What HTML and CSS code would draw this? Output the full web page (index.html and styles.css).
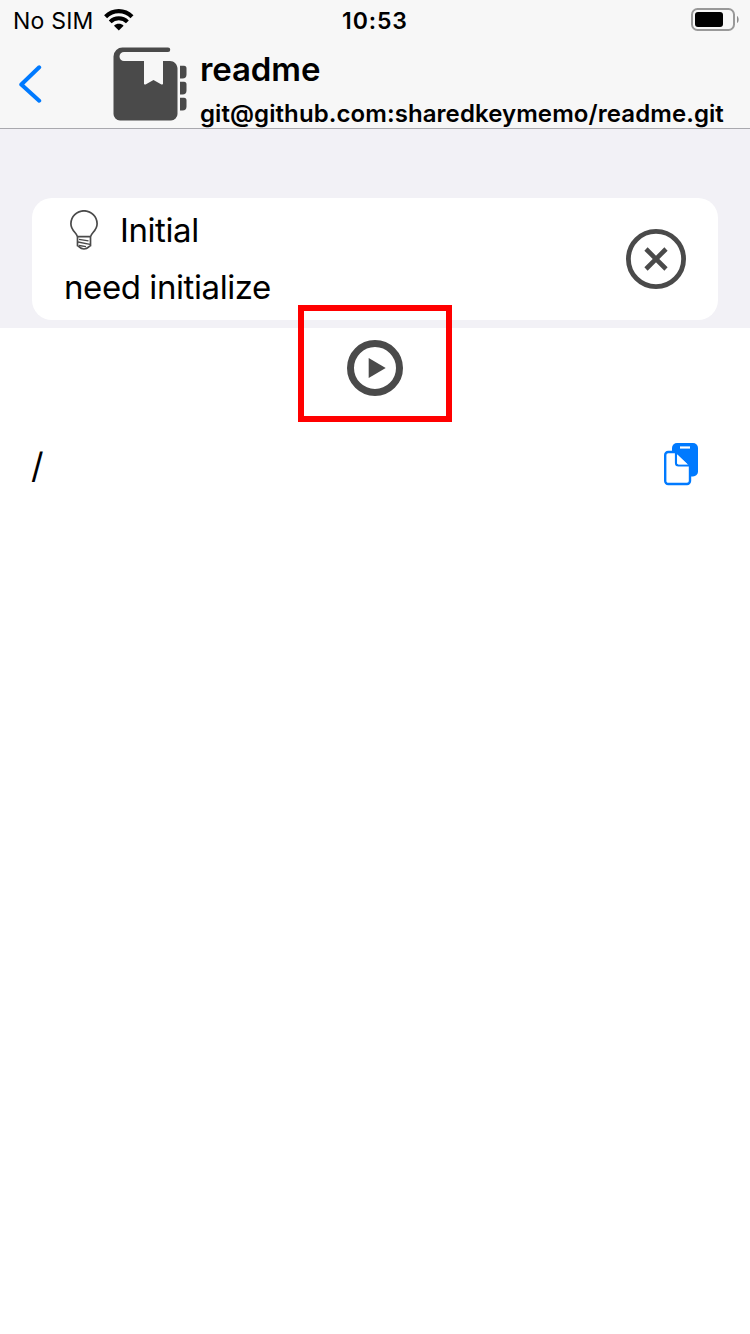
FILE: index.html
```html
<!DOCTYPE html>
<html lang="en">
<head>
<meta charset="utf-8">
<title>readme</title>
<link rel="stylesheet" href="styles.css">
</head>
<body>
<header class="header">
  <div class="status">
    <div class="carrier"><span class="carrier-name">No SIM</span>
      <svg class="wifi" width="30" height="22" viewBox="0 0 30 22" fill="none" stroke="#000"><path d="M1.600 7.800C9 .3 20.500 .3 28 7.800" stroke-width="4.200"/><path d="M6.200 12.800C11 8 18.600 8 23.400 12.800" stroke-width="4"/><path d="M10 16.700c2.600-2.600 7-2.600 9.600 0L14.800 21.500z" fill="#000" stroke="none"/></svg>
    </div>
    <time class="clock">10:53</time>
    <svg class="battery" width="48" height="24" viewBox="0 0 48 24"><rect x="1" y="1" width="42" height="21" rx="5.500" fill="none" stroke="#999" stroke-width="2"/><rect x="4" y="4" width="28" height="15" rx="3" fill="#000"/><path d="M46 8c2.200 1 2.200 6 0 7z" fill="#8c8c8c"/></svg>
  </div>
  <div class="nav">
    <svg class="back" width="24" height="40" viewBox="0 0 24 40" fill="none" stroke="#007aff" stroke-width="4" stroke-linecap="round" stroke-linejoin="round"><path d="M21.200 3.300 3.300 20.500 21.200 36.700"/></svg>
    <svg class="book" width="74" height="74" viewBox="0 0 74 74" fill="#4a4a4a"><path d="M9 .5H54a2.200 2.200 0 0 1 0 4.500H10a4.500 4.500 0 0 0 0 9H30V36.500c0 1 1 1.400 2 .8L39.500 33l7.500 4.300c1 .6 2 .2 2-.8V14h7c4 0 7.500 3.500 7.500 7.500V67a6.500 6.500 0 0 1-6.500 6.500H6A6.500 6.500 0 0 1-.5 67V9.500A9 9 0 0 1 9 .5z"/><path d="M66 18.800h4a2.500 2.500 0 0 1 2.500 2.500v6.200a4 4 0 0 1-4 4H66zM66 34.800h4a2.500 2.500 0 0 1 2.500 2.500v6.200a4 4 0 0 1-4 4H66zM66 50.800h4a2.500 2.500 0 0 1 2.500 2.500v6.200a4 4 0 0 1-4 4H66z"/></svg>
    <div class="heading"><h1 class="title">readme</h1><div class="remote">git@github.com:sharedkeymemo/readme.git</div></div>
  </div>
</header>
<main>
  <section class="panel">
    <div class="card">
      <div class="state">
        <div class="state-name">
          <svg class="bulb" width="28" height="40" viewBox="0 0 28 40" fill="none" stroke="#4a4a4a" stroke-width="1.700"><path d="M7.500 26.700C6.500 22.500.9 20.500.9 13.700a13.100 12.900 0 0 1 26.200 0C27.100 20.500 21.500 22.500 20.500 26.700zM7.500 26.700v9c2 .5 2 3.300 6.500 3.300s4.500-2.800 6.500-3.300v-9"/><path d="M9 29.300l9.500 1.500M8 32l12 2.300M9 35.500l7 1.200" stroke-width="1.300"/></svg>
          <span class="label">Initial</span>
        </div>
        <div class="detail">need initialize</div>
      </div>
      <svg class="cancel" width="60" height="60" viewBox="0 0 60 60" fill="none" stroke="#4a4a4a"><circle cx="30" cy="30" r="27.600" stroke-width="4.800"/><path d="m20 20 20 20m0-20L20 40" stroke-width="4.600"/></svg>
    </div>
  </section>
  <div class="actions"><svg width="56" height="56" viewBox="0 0 56 56"><circle cx="28" cy="28" r="24.500" fill="none" stroke="#4a4a4a" stroke-width="7"/><path d="M21.700 18v20l17-10z" fill="#4a4a4a"/></svg><div class="highlight"></div></div>
  <div class="path-row">
    <span class="path">/</span>
    <svg class="copy" width="35" height="43" viewBox="0 0 35 43"><rect x="8" y="0" width="26" height="33.500" rx="5" fill="#007aff"/><path d="M16 4.500h10" stroke="#fff" stroke-width="2.200"/><path d="M1.200 12a3 3 0 0 1 3-3h8L26 22v16a3 3 0 0 1-3 3H4.200a3 3 0 0 1-3-3z" fill="#fff" stroke="#007aff" stroke-width="2.400"/><path d="M12 9.500v10.500a2.500 2.500 0 0 0 2.500 2.500H26" fill="none" stroke="#007aff" stroke-width="2.200"/><path d="M13.200 11.500v8.300a1.500 1.500 0 0 0 1.500 1.500h8.500z" fill="#fff"/></svg>
  </div>
</main>
</body>
</html>
```
FILE: styles.css
```css
* { box-sizing: border-box; }
body { margin: 0; width: 750px; min-height: 1334px; background: #fff; color: #000; font-family: Inter, "Liberation Sans", sans-serif; }
svg { display: block; flex: none; }
.header { height: 129px; background: #f7f7f7; border-bottom: 1px solid #a9a9ae; }
.status { height: 40px; display: grid; grid-template-columns: 1fr auto 1fr; grid-template-rows: 40px; align-items: center; padding: 0 11px 0 13px; }
.carrier { display: flex; align-items: center; gap: 10px; height: 40px; }
.carrier-name { font-size: 23px; letter-spacing: 0.2px; line-height: 40px; padding-top: 2px; }
.clock { font-size: 23px; font-weight: 600; letter-spacing: 0.9px; line-height: 40px; padding-top: 2px; margin-left: -2px; }
.battery { justify-self: end; }
.nav { height: 88px; display: flex; align-items: flex-start; padding-left: 18px; }
.back { margin-top: 24px; }
.book { margin: 7px 0 0 72px; overflow: visible; }
.heading { margin-left: 12px; white-space: nowrap; }
.title { margin: 8px 0 0; font-size: 33px; font-weight: 600; line-height: 42px; letter-spacing: -0.1px; }
.remote { margin-top: 9px; font-size: 24px; font-weight: 600; line-height: 30px; letter-spacing: 0.08px; }
.panel { height: 199px; padding: 69px 32px 8px; background: #f2f1f6; }
.card { height: 122px; display: flex; align-items: center; justify-content: space-between; padding: 0 32px; border-radius: 20px; background: #fff; }
.state { align-self: flex-start; font-size: 33px; letter-spacing: -0.42px; }
.state-name { display: flex; align-items: center; gap: 22px; height: 64px; padding-left: 6px; }
.detail { line-height: 50px; }
.actions { position: relative; height: 80px; display: flex; align-items: center; justify-content: center; }
.highlight { position: absolute; left: 298px; top: -23px; width: 154px; height: 117px; border: 6px solid #f00; }
.path-row { display: flex; align-items: center; justify-content: space-between; height: 80px; margin-top: 16px; padding: 0 51px 0 31px; }
.path { font-size: 35px; padding-top: 2px; }
```
